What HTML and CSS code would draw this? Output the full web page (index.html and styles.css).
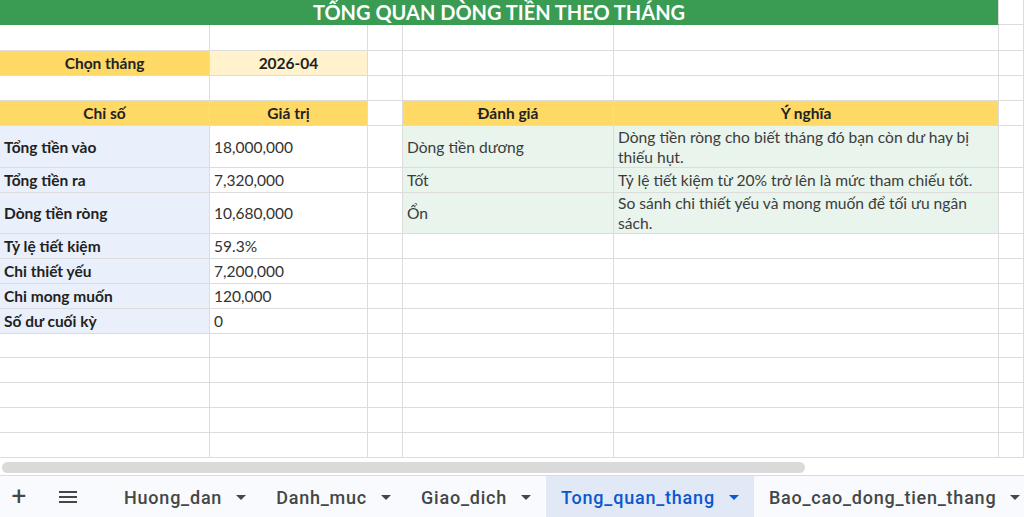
FILE: index.html
```html
<!DOCTYPE html>
<html lang="vi">
<head>
<meta charset="utf-8">
<title>Tong_quan_thang</title>
<link rel="stylesheet" href="styles.css">
</head>
<body>
<div class="app">
  <div class="sheet">
    <div class="c title">TỔNG QUAN DÒNG TIỀN THEO THÁNG</div><div class="c"></div>

    <div class="c"></div><div class="c"></div><div class="c"></div><div class="c"></div><div class="c"></div><div class="c"></div>

    <div class="c yel ctr b">Chọn tháng</div><div class="c lyel ctr b">2026-04</div><div class="c"></div><div class="c"></div><div class="c"></div><div class="c"></div>

    <div class="c"></div><div class="c"></div><div class="c"></div><div class="c"></div><div class="c"></div><div class="c"></div>

    <div class="c yel ctr b">Chỉ số</div><div class="c yel ctr b">Giá trị</div><div class="c"></div><div class="c yel ctr b">Đánh giá</div><div class="c yel ctr b">Ý nghĩa</div><div class="c"></div>

    <div class="c blue b">Tổng tiền vào</div><div class="c val">18,000,000</div><div class="c"></div><div class="c grn txt">Dòng tiền dương</div><div class="c grn txt wrap">Dòng tiền ròng cho biết tháng đó bạn còn dư hay bị thiếu hụt.</div><div class="c"></div>

    <div class="c blue b">Tổng tiền ra</div><div class="c val">7,320,000</div><div class="c"></div><div class="c grn txt">Tốt</div><div class="c grn txt">Tỷ lệ tiết kiệm từ 20% trở lên là mức tham chiếu tốt.</div><div class="c"></div>

    <div class="c blue b">Dòng tiền ròng</div><div class="c val">10,680,000</div><div class="c"></div><div class="c grn txt">Ổn</div><div class="c grn txt wrap">So sánh chi thiết yếu và mong muốn để tối ưu ngân sách.</div><div class="c"></div>

    <div class="c blue b">Tỷ lệ tiết kiệm</div><div class="c val">59.3%</div><div class="c"></div><div class="c"></div><div class="c"></div><div class="c"></div>

    <div class="c blue b">Chi thiết yếu</div><div class="c val">7,200,000</div><div class="c"></div><div class="c"></div><div class="c"></div><div class="c"></div>

    <div class="c blue b">Chi mong muốn</div><div class="c val">120,000</div><div class="c"></div><div class="c"></div><div class="c"></div><div class="c"></div>

    <div class="c blue b">Số dư cuối kỳ</div><div class="c val">0</div><div class="c"></div><div class="c"></div><div class="c"></div><div class="c"></div>

    <div class="c"></div><div class="c"></div><div class="c"></div><div class="c"></div><div class="c"></div><div class="c"></div>
    <div class="c"></div><div class="c"></div><div class="c"></div><div class="c"></div><div class="c"></div><div class="c"></div>
    <div class="c"></div><div class="c"></div><div class="c"></div><div class="c"></div><div class="c"></div><div class="c"></div>
    <div class="c"></div><div class="c"></div><div class="c"></div><div class="c"></div><div class="c"></div><div class="c"></div>
    <div class="c"></div><div class="c"></div><div class="c"></div><div class="c"></div><div class="c"></div><div class="c"></div>
  </div>

  <div class="hscroll"><div class="thumb"></div></div>

  <div class="tabbar">
    <div class="tool plus">+</div>
    <div class="tool menu">
      <svg width="20" height="14" viewBox="0 0 20 14"><path d="M1 2h18M1 7h18M1 12h18" stroke="#444746" stroke-width="2"/></svg>
    </div>
    <div class="tab first"><span>Huong_dan</span><svg class="caret" width="10" height="5" viewBox="0 0 10 5"><path d="M0 0h10L5 5z"/></svg></div>
    <div class="tab"><span>Danh_muc</span><svg class="caret" width="10" height="5" viewBox="0 0 10 5"><path d="M0 0h10L5 5z"/></svg></div>
    <div class="tab"><span>Giao_dich</span><svg class="caret" width="10" height="5" viewBox="0 0 10 5"><path d="M0 0h10L5 5z"/></svg></div>
    <div class="tab active"><span>Tong_quan_thang</span><svg class="caret" width="10" height="5" viewBox="0 0 10 5"><path d="M0 0h10L5 5z"/></svg></div>
    <div class="tab"><span>Bao_cao_dong_tien_thang</span><svg class="caret" width="10" height="5" viewBox="0 0 10 5"><path d="M0 0h10L5 5z"/></svg></div>
  </div>
</div>
</body>
</html>
```

FILE: styles.css
```css
html, body {
  margin: 0;
  padding: 0;
  background: #ffffff;
}
.app {
  width: 1024px;
  height: 517px;
  overflow: hidden;
  display: flex;
  flex-direction: column;
}
.sheet {
  display: grid;
  grid-template-columns: 210px 158px 35px 211px 385px 1fr;
  grid-template-rows: 25px 26px 25px 25px 25px 42px 25px 41px 25px 25px 25px 25px 24px 25px 25px 25px 25px;
  height: 458px;
  flex: none;
  font-family: Lato, "Open Sans", sans-serif;
  font-size: 15.5px;
  color: #222222;
}
.c {
  box-sizing: border-box;
  border-right: 1px solid #dcdcdc;
  border-bottom: 1px solid #dcdcdc;
  display: flex;
  align-items: center;
  padding: 0 4px;
  overflow: hidden;
  white-space: nowrap;
}
.title {
  grid-column: 1 / span 5;
  background: #3a9b53;
  color: #ffffff;
  font-weight: 700;
  font-size: 20px;
  justify-content: center;
  border-bottom-color: #3a9b53;
}
.yel { background: #ffd966; }
.lyel { background: #fff2cc; }
.blue { background: #e9f0fb; }
.grn { background: #e8f4ec; }
.ctr { justify-content: center; }
.b { font-weight: 700; }
.val { color: #333333; }
.txt {
  color: #3c3c3c;
  font-size: 15.6px;
}
.wrap {
  white-space: normal;
  line-height: 20px;
}
.hscroll {
  height: 18px;
  flex: none;
  box-sizing: border-box;
  border-bottom: 1px solid #dadce0;
  padding: 4px 0 0 2px;
}
.thumb {
  width: 803px;
  height: 11px;
  border-radius: 6px;
  background: #dadada;
}
.tabbar {
  flex: 1;
  background: #f8fafd;
  display: flex;
  align-items: stretch;
  overflow: hidden;
  font-family: Roboto, "Noto Sans", sans-serif;
  font-size: 18px;
  letter-spacing: 0.78px;
  font-weight: 500;
  color: #444746;
}
.tool {
  flex: none;
  display: flex;
  align-items: center;
  justify-content: center;
}
.plus {
  width: 38px;
  font-size: 26px;
  font-weight: 400;
  letter-spacing: 0;
  padding-bottom: 2px;
}
.menu {
  width: 60px;
}
.tab {
  flex: none;
  display: flex;
  align-items: center;
  padding: 2px 15px 0;
  gap: 14px;
}
.tab.first { margin-left: 11px; }
.caret { fill: #444746; }
.tab.active {
  background: #e1e9f7;
  color: #0b57d0;
}
.tab.active .caret { fill: #0b57d0; }
```
